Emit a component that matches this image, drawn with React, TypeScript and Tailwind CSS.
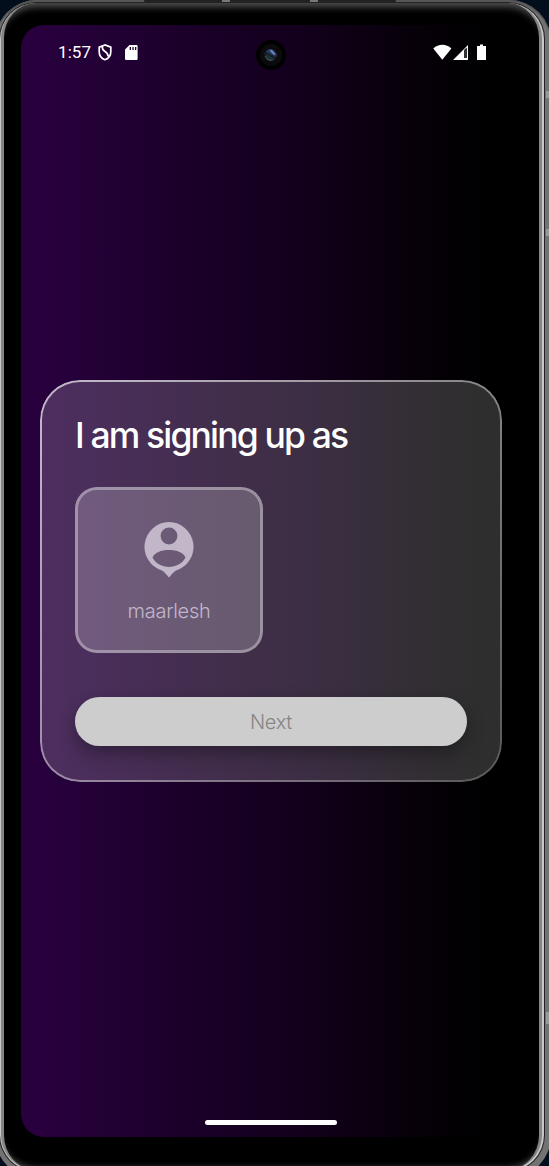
const StatusBar = () => (
  <div className="relative flex h-[54px] shrink-0 items-center text-white">
    <span className="ml-[37px] w-[34px] whitespace-nowrap font-['Roboto',sans-serif] text-[17px] leading-[20px] tracking-[0.1px]">1:57</span>
    <svg className="ml-[6px] mt-[1px] h-[17px] w-[14px]" viewBox="0 0 14 17" fill="none" stroke="currentColor" strokeWidth="1.7">
      <path d="M7 1 1.200 3.200v4.500C1.200 11.400 3.500 14.500 7 15.800c3.500-1.300 5.800-4.400 5.800-8.100V3.200Z" />
      <path d="M4.200 2.200Q4.200 6 7 7.500T10.200 12.500" />
    </svg>
    <svg className="ml-[13px] mt-[1px] h-[15px] w-[13px]" viewBox="0 0 13 15">
      <path fillRule="evenodd" fill="currentColor" d="M4.5 0H11.5Q12.6 0 12.6 1.2V13.8Q12.6 15 11.4 15H1.2Q0 15 0 13.8V4.6ZM4.7 2V5H6V2ZM7.4 2V5H8.7V2ZM10 2V5H11.3V2Z" />
    </svg>
    <div className="absolute left-[235px] top-[15px] flex h-[30px] w-[30px] items-center justify-center rounded-full bg-black">
      <svg className="h-[24px] w-[24px]" viewBox="0 0 24 24">
        <circle cx="12" cy="12" r="11" fill="#0b0b0d" />
        <circle cx="11.500" cy="12" r="6.200" fill="#1b1d20" />
        <path d="M7 9C8 6.500 11 5.500 13.500 6.500L18 11.500 17 14Z" fill="#283960" />
        <path d="M10.500 7.500 13 7l3.500 4-1.500 1Z" fill="#718bc2" />
        <path d="M7 10.500 15.500 16C13 19 7 18 7 10.500Z" fill="#15353a" />
        <path d="M6.500 13c.5 3 4 5 7 4" stroke="#55545a" fill="none" />
      </svg>
    </div>
    <svg className="ml-[295px] h-[16px] w-[54px]" viewBox="0 0 54 16" fill="currentColor">
      <path d="M.3 4.500C5.500-.4 13.200-.4 18.400 4.500L9.300 15.700Z" />
      <path fillRule="evenodd" d="M35 1V16H20ZM31 6.200V14H33.800V3.600Z" />
      <path d="M31 6.200V14H33.800V4Z" fill="#333" />
      <path d="M44 2H47V.5H50V2H53V16H44Z" />
    </svg>
  </div>
);

const PersonPin = () => (
  <svg className="h-[56px] w-[50px] text-[#c1b7c9]" viewBox="0 0 50 56">
    <path
      fill="currentColor"
      fillRule="evenodd"
      d="M25 0a24.800 24.800 0 0 1 7 48.500Q29.500 50 25 55.500 20.500 50 18 48.500A24.800 24.800 0 0 1 25 0ZM25 5.600a8.400 8.400 0 1 0 0 16.800 8.400 8.400 0 1 0 0-16.800ZM8.500 35.600C11.800 42 18 45 25 45s13.200-3 16.500-9.400C39.500 30.500 33 28 25 28S10.500 30.500 8.500 35.600Z"
    />
  </svg>
);

const SignUpCard = () => (
  <section className="relative ml-[19px] mt-[301px] h-[402px] w-[462px] shrink-0 rounded-[40px] bg-white/[0.18] px-[35px] font-['Inter',sans-serif]">
    <div className="pointer-events-none absolute inset-0 rounded-[40px] bg-[linear-gradient(135deg,rgba(255,255,255,0.68),rgba(255,255,255,0.45)_45%,rgba(255,255,255,0.2))] p-[2px] [mask:linear-gradient(#000_0_0)_content-box_exclude,linear-gradient(#000_0_0)]" />
    <h1 className="whitespace-nowrap pt-[34px] text-[35.500px] font-medium leading-[44px] tracking-[-1.850px] text-white">I am signing up as</h1>
    <button className="mt-[29px] flex h-[166px] w-[188px] flex-col items-center rounded-[22px] border-[3px] border-white/[0.48] bg-white/[0.21] pt-[32px] [background-clip:padding-box]">
      <PersonPin />
      <span className="mt-[20px] text-[20px] font-light leading-[26px] tracking-[-0.300px] text-[#c1b7c9]">maarlesh</span>
    </button>
    <button className="mt-[44px] flex h-[49px] w-full items-center justify-center rounded-[24.500px] bg-[#cdcdcd] pt-[1px] text-[20px] font-light tracking-[-0.300px] text-[#858585] shadow-[0_8px_18px_rgba(0,0,0,0.32)]">Next</button>
  </section>
);

export default function App() {
  return (
    <main className="h-[1166px] w-[549px] overflow-hidden bg-[#020e1c]">
      <div className="relative -ml-[5px] h-[1178px] w-[556px] rounded-[42px] bg-[#737373] pl-[5px] pt-[3px] shadow-[inset_0_2px_1px_#555]">
        <div className="absolute left-[149px] top-0 flex h-[3px] w-[252px] justify-between rounded-b bg-[#222] px-[78px]">
          <i className="h-[2px] w-[8px] bg-[#777]" />
          <i className="h-[2px] w-[8px] bg-[#777]" />
        </div>
        <i className="absolute right-[2px] top-[91px] h-[7px] w-[3px] bg-[#999]" />
        <i className="absolute right-[2px] top-[229px] h-[7px] w-[3px] bg-[#999]" />
        <i className="absolute right-[2px] top-[1012px] h-[12px] w-[3px] bg-[#999]" />
        <div className="h-[1168px] w-[544px] rounded-[36px] bg-[#c8c8c8] pl-[1px] shadow-[0_0_0_1px_#222]">
          <div className="h-[1167px] w-[541px] rounded-[35px] border-x-[3px] border-x-[#858585] bg-black pl-[17px] pt-[22px] shadow-[inset_0_12px_7px_-8px_#505050,inset_0_-8px_6px_-6px_#505050]">
            <div className="flex h-[1112px] w-[504px] flex-col overflow-hidden rounded-[23px] bg-[linear-gradient(90deg,#29003e_0%,#25003a_10%,#1b0029_33%,#12001b_57%,#070009_78%,#020003_88%,#000_94%)]">
              <StatusBar />
              <SignUpCard />
              <div className="mb-[12px] ml-[184px] mt-auto h-[5px] w-[132px] shrink-0 rounded-full bg-white" />
            </div>
          </div>
        </div>
      </div>
    </main>
  );
}
